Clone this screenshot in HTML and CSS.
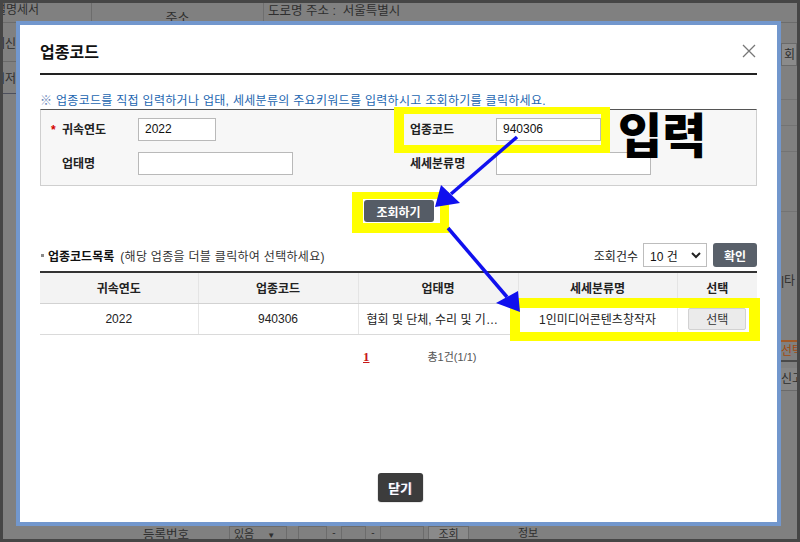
FILE: index.html
```html
<!DOCTYPE html>
<html lang="ko">
<head>
<meta charset="utf-8">
<title>업종코드</title>
<link rel="stylesheet" href="styles.css">
</head>
<body>
<div class="frame">
  <div class="bg">
    <div class="bg-top">
      <div class="bt-c1">설명세서</div>
      <div class="bt-c2">주소</div>
      <div class="bt-c3">도로명 주소 :&nbsp; 서울특별시</div>
    </div>
    <div class="bg-mid">
      <div class="bg-left">
        <div class="bl-r1"><span>계신</span></div>
        <div class="bl-r2"><span>서저</span></div>
      </div>
      <div class="bg-gap"></div>
      <div class="bg-right">
        <div class="br-sp1"></div>
        <div class="br-btn">회</div>
        <div class="br-line br-l1"></div>
        <div class="br-line br-l2"></div>
        <div class="br-line br-l3"></div>
        <div class="br-line br-l4"></div>
        <div class="br-ta">|타</div>
        <div class="br-sel">선택</div>
        <div class="br-sin">신고</div>
      </div>
    </div>
    <div class="bg-bottom">
      <div class="bb-label">등록번호</div>
      <div class="bb-select">있음 <span class="bb-caret">▼</span></div>
      <div class="bb-box bb-b1"></div>
      <span class="bb-dash">-</span>
      <div class="bb-box bb-b2"></div>
      <span class="bb-dash">-</span>
      <div class="bb-box bb-b3"></div>
      <div class="bb-btn">조회</div>
      <div class="bb-info">정보</div>
    </div>
  </div>

  <div class="modal">
    <div class="m-head">
      <h1 class="m-title">업종코드</h1>
      <svg class="m-close" width="14" height="14" viewBox="0 0 14 14"><path d="M1 1 L13 13 M13 1 L1 13" stroke="#777" stroke-width="1.3" fill="none"/></svg>
    </div>
    <p class="m-notice"><span class="m-mark">※</span> 업종코드를 직접 입력하거나 업태, 세세분류의 주요키워드를 입력하시고 조회하기를 클릭하세요.</p>
    <div class="m-search">
      <div class="lbl"><span class="req">*</span>귀속연도</div>
      <div><div class="inp inp-year">2022</div></div>
      <div class="lbl">업종코드</div>
      <div><div class="inp inp-code">940306</div></div>
      <div class="lbl lbl-pad">업태명</div>
      <div><div class="inp inp-wide"></div></div>
      <div class="lbl">세세분류명</div>
      <div><div class="inp inp-wide"></div></div>
    </div>
    <div class="m-btnrow">
      <button class="btn-dark btn-search">조회하기</button>
    </div>
    <div class="m-listhead">
      <div class="lh-left"><span class="lh-bullet"></span><strong>업종코드목록</strong><span class="lh-sub">(해당 업종을 더블 클릭하여 선택하세요)</span></div>
      <div class="lh-right">
        <span class="lh-count">조회건수</span>
        <div class="sel">10 건<svg class="sel-chev" width="10" height="7" viewBox="0 0 10 7"><path d="M1 1 L5 5 L9 1" stroke="#222" stroke-width="2" fill="none"/></svg></div>
        <button class="btn-dark btn-ok">확인</button>
      </div>
    </div>
    <table class="m-table">
      <colgroup>
        <col class="c1"><col class="c2"><col class="c3"><col class="c4"><col class="c5">
      </colgroup>
      <thead>
        <tr><th>귀속연도</th><th>업종코드</th><th>업태명</th><th>세세분류명</th><th>선택</th></tr>
      </thead>
      <tbody>
        <tr>
          <td>2022</td>
          <td>940306</td>
          <td class="td-ellip">협회 및 단체, 수리 및 기타 개인 서비스업</td>
          <td>1인미디어콘텐츠창작자</td>
          <td><button class="btn-light">선택</button></td>
        </tr>
      </tbody>
    </table>
    <div class="m-paging">
      <a class="pg-cur">1</a>
      <span class="pg-total">총1건(1/1)</span>
    </div>
    <div class="m-foot">
      <button class="btn-close">닫기</button>
    </div>
  </div>

  <div class="hl hl1"></div>
  <div class="hl hl2"></div>
  <div class="hl hl3"></div>
  <div class="note">입력</div>
  <svg class="annot" width="794" height="536" viewBox="3 3 794 536">
    <line x1="517" y1="137" x2="451" y2="194" stroke="#1010ee" stroke-width="3.5"/>
    <polygon points="435,207 441,185 460,203" fill="#1010ee"/>
    <line x1="448" y1="228" x2="507" y2="297" stroke="#1010ee" stroke-width="3.5"/>
    <polygon points="520,312 496,303 518,291" fill="#1010ee"/>
  </svg>
</div>
</body>
</html>
```

FILE: styles.css
```css
* { box-sizing: border-box; }

body {
  margin: 0;
  background: #808080;
  font-family: "Liberation Sans", "Noto Sans CJK KR", sans-serif;
}

.frame {
  position: relative;
  width: 800px;
  height: 542px;
  border: 3px solid #464646;
  background: #808080;
  overflow: hidden;
}

/* ---------- dimmed background page ---------- */
.bg {
  display: grid;
  grid-template-rows: 20px 1fr 13px;
  height: 100%;
  color: #2e2e2e;
  font-size: 12px;
}

.bg-top {
  display: flex;
  border-bottom: 1px solid #6c6c6c;
  white-space: nowrap;
}
.bt-c1 {
  width: 89px;
  overflow: hidden;
  text-indent: -8px;
  line-height: 14px;
  border-right: 1px solid #6c6c6c;
}
.bt-c2 {
  width: 172px;
  text-align: center;
  padding-top: 8px;
  line-height: 14px;
  border-right: 1px solid #6e6e6e;
  font-size: 13px;
}
.bt-c3 {
  padding-left: 4px;
  line-height: 16px;
  font-size: 12.5px;
}

.bg-mid {
  display: flex;
}
.bg-left {
  width: 13px;
  overflow: hidden;
}
.bl-r1, .bl-r2 {
  white-space: nowrap;
  overflow: hidden;
  display: flex;
  align-items: center;
  justify-content: flex-end;
}
.bl-r1 span, .bl-r2 span { flex: none; }
.bl-r1 {
  height: 39px;
  border-bottom: 1px solid #6a6a6a;
}
.bl-r2 {
  height: 32px;
  border-bottom: 1px solid #4c4f5c;
}
.bg-gap { flex: 1; }
.bg-right {
  width: 16px;
  overflow: hidden;
  white-space: nowrap;
  display: flex;
  flex-direction: column;
}
.br-sp1 { height: 20px; }
.br-btn {
  height: 23px;
  line-height: 22px;
  background: #8b8b8b;
  border: 1px solid #6a6a6a;
  padding-left: 2px;
}
.br-line { border-bottom: 1px solid #737373; }
.br-l1 { height: 34px; }
.br-l2 { height: 26px; }
.br-l3 { height: 26px; }
.br-l4 { height: 60px; }
.br-ta {
  margin-top: 62px;
  line-height: 14px;
}
.br-sel {
  margin-top: 52px;
  border-top: 2px solid #a05a2a;
  border-bottom: 2px solid #4a4a4a;
  color: #a04a10;
  line-height: 18px;
}
.br-sin {
  margin-top: 6px;
  line-height: 22px;
  background: #868686;
  border-bottom: 1px solid #6a6a6a;
}

.bg-bottom {
  display: flex;
  align-items: flex-start;
  padding-left: 140px;
  overflow: hidden;
  line-height: 14px;
}
.bb-label { width: 48px; margin-top: 2px; font-size: 12.5px; }
.bb-select {
  margin-left: 38px;
  width: 58px;
  height: 16px;
  border: 1px solid #6c6c6c;
  padding-left: 4px;
  font-size: 11px;
}
.bb-caret { font-size: 8px; margin-left: 10px; }
.bb-box { height: 16px; border: 1px solid #6c6c6c; }
.bb-b1 { margin-left: 11px; width: 29px; }
.bb-b2 { width: 25px; }
.bb-b3 { width: 44px; }
.bb-dash { width: 14px; text-align: center; font-size: 10px; }
.bb-btn {
  margin-left: 4px;
  width: 41px;
  height: 16px;
  border: 1px solid #6c6c6c;
  background: #8a8a8a;
  text-align: center;
  font-size: 11px;
}
.bb-info { margin-left: 49px; font-size: 11px; }

/* ---------- modal ---------- */
.modal {
  position: absolute;
  left: 13px;
  top: 18px;
  width: 765px;
  height: 505px;
  border: 4px solid #7297cd;
  background: #fff;
  padding: 0 20px 21px;
  display: flex;
  flex-direction: column;
  color: #222;
  font-size: 12px;
}

.m-head {
  display: flex;
  justify-content: space-between;
  align-items: center;
  padding: 16px 0 8px;
  border-bottom: 2px solid #222;
}
.m-title {
  margin: 0;
  font-size: 16px;
  line-height: 24px;
  font-weight: bold;
  color: #111;
}
.m-close {
  margin-right: 1px;
  margin-bottom: 5px;
}

.m-notice {
  margin: 18px 0 0;
  line-height: 16px;
  color: #2366b0;
  font-size: 12px;
  letter-spacing: 0.3px;
  white-space: nowrap;
}
.m-mark { color: #6a86b8; }

.m-search {
  display: grid;
  grid-template-columns: 87px 272px 86px 1fr;
  row-gap: 11px;
  align-items: center;
  padding: 8px 0 10px 10px;
  border: 1px solid #cfcfcf;
  border-top-color: #555;
  background: #f7f7f7;
}
.lbl {
  font-weight: bold;
  color: #222;
  line-height: 16px;
}
.lbl-pad { padding-left: 11px; }
.req {
  display: inline-block;
  width: 11px;
  color: #d40000;
}
.inp {
  height: 23px;
  border: 1px solid #b9b9b9;
  background: #fff;
  padding-left: 6px;
  line-height: 21px;
  font-size: 12px;
  color: #111;
}
.inp-year { width: 78px; }
.inp-code { width: 105px; }
.inp-wide { width: 155px; }

.m-btnrow {
  display: flex;
  justify-content: center;
  margin-top: 14px;
}
.btn-dark {
  border: none;
  border-radius: 3px;
  background: #555c66;
  color: #fff;
  font-family: inherit;
  font-weight: bold;
  font-size: 12px;
  padding: 0;
}
.btn-search { width: 70px; height: 22px; }

.m-listhead {
  display: flex;
  justify-content: space-between;
  align-items: center;
  height: 24px;
  margin-top: 21px;
}
.lh-left {
  display: flex;
  align-items: center;
  white-space: nowrap;
}
.lh-bullet {
  width: 3px;
  height: 3px;
  background: #8a8a8a;
  margin: 0 4px 0 1px;
}
.lh-left strong { color: #111; }
.lh-sub {
  color: #333;
  margin-left: 6px;
  letter-spacing: 0.3px;
}
.lh-right {
  display: flex;
  align-items: center;
}
.lh-count { margin-right: 5px; color: #222; }
.sel {
  display: flex;
  align-items: center;
  justify-content: space-between;
  width: 64px;
  height: 24px;
  border: 1px solid #bdbdbd;
  background: #fff;
  padding: 0 5px 0 6px;
  color: #111;
}
.btn-ok {
  width: 44px;
  height: 24px;
  margin-left: 6px;
  background: #59606a;
}

.m-table {
  margin-top: 4px;
  width: 100%;
  border-collapse: collapse;
  table-layout: fixed;
  border-top: 2px solid #333;
}
.c1 { width: 158px; }
.c2 { width: 160px; }
.c3 { width: 160px; }
.c4 { width: 159px; }
.c5 { width: 80px; }
.m-table th {
  height: 31px;
  padding: 0;
  background: #f3f3f3;
  font-weight: bold;
  color: #222;
  border-bottom: 1px solid #d2d2d2;
  border-left: 1px solid #e4e4e4;
}
.m-table td {
  height: 31px;
  padding: 0;
  text-align: center;
  color: #222;
  border-bottom: 1px solid #dadada;
  border-left: 1px solid #e6e6e6;
}
.m-table th:first-child, .m-table td:first-child { border-left: none; }
.m-table td.td-ellip {
  text-align: left;
  padding: 0 9px 0 8px;
  white-space: nowrap;
  overflow: hidden;
  text-overflow: ellipsis;
}
.btn-light {
  width: 58px;
  height: 22px;
  border: 1px solid #d2d2d2;
  border-radius: 2px;
  background: #ebebeb;
  font-family: inherit;
  font-size: 12px;
  color: #333;
  padding: 0;
}

.m-paging {
  display: flex;
  align-items: center;
  margin-top: 14px;
  padding-left: 323px;
  line-height: 16px;
}
.pg-cur {
  font-family: "Liberation Serif", serif;
  font-weight: bold;
  font-size: 13px;
  color: #c81818;
  text-decoration: underline;
}
.pg-total {
  margin-left: 58px;
  font-size: 11px;
  color: #555;
}

.m-foot {
  margin-top: auto;
  display: flex;
  justify-content: center;
  padding-left: 3px;
}
.btn-close {
  width: 45px;
  height: 28px;
  border: none;
  border-radius: 3px;
  background: #3c3c3c;
  color: #fff;
  font-family: inherit;
  font-weight: bold;
  font-size: 13px;
  padding: 0;
  box-shadow: 0 1px 1px #222;
  text-shadow: 1px 0 0 #6a6a9a;
}

/* ---------- annotations over the screenshot ---------- */
.hl {
  position: absolute;
  border: solid #ffff00;
}
.hl1 {
  left: 391px;
  top: 104px;
  width: 216px;
  height: 46px;
  border-width: 7px 9px 8px 10px;
}
.hl2 {
  left: 349px;
  top: 189px;
  width: 97px;
  height: 41px;
  border-width: 7px 9px 10px 11px;
}
.hl3 {
  left: 507px;
  top: 295px;
  width: 250px;
  height: 43px;
  border-width: 10px 11px 9px 10px;
}
.note {
  position: absolute;
  left: 615px;
  top: 105px;
  font-family: "Noto Sans CJK KR", sans-serif;
  font-weight: 900;
  font-size: 48px;
  line-height: 48px;
  color: #000;
}
.annot {
  position: absolute;
  left: 0;
  top: 0;
  pointer-events: none;
}
```
